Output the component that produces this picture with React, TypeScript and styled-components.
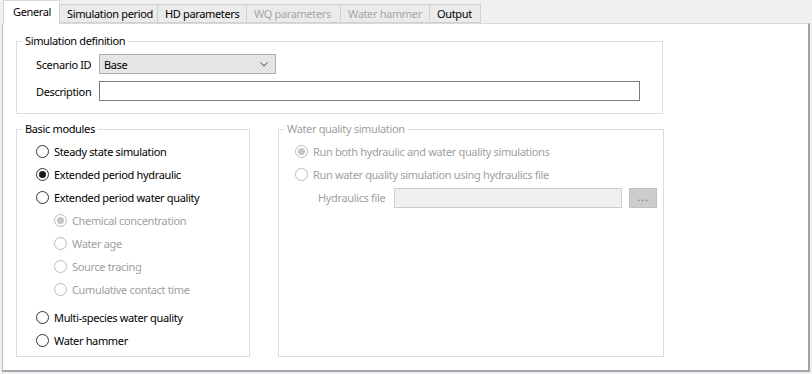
import { type FC } from "react";
import styled, { createGlobalStyle } from "styled-components";

const GlobalStyle = createGlobalStyle`
  html, body {
    margin: 0;
    padding: 0;
    background: #f0f0f0;
  }
  body {
    font-family: "Noto Sans", "DejaVu Sans", sans-serif;
    font-size: 11px;
    letter-spacing: -0.35px;
    color: #000;
  }
`;

const Window = styled.div`
  width: 812px;
  height: 374px;
  display: flex;
  flex-direction: column;
  box-sizing: border-box;
`;

const TabStrip = styled.div`
  display: flex;
  align-items: flex-end;
  height: 23px;
  padding-left: 3px;
  position: relative;
  z-index: 1;
`;

const Tab = styled.div<{ $active?: boolean; $disabled?: boolean; $width: number }>`
  box-sizing: border-box;
  width: ${(p) => p.$width}px;
  height: ${(p) => (p.$active ? 24 : 19)}px;
  margin-bottom: ${(p) => (p.$active ? -1 : 0)}px;
  padding-left: ${(p) => (p.$active ? 9 : 7)}px;
  padding-bottom: ${(p) => (p.$active ? 2 : 0)}px;
  display: flex;
  align-items: center;
  background: ${(p) => (p.$active ? "#ffffff" : "#ebebeb")};
  border: 1px solid ${(p) => (p.$active ? "#d9d9d9" : "#d0d0d0")};
  border-bottom: ${(p) => (p.$active ? "none" : "1px solid #d0d0d0")};
  color: ${(p) => (p.$disabled ? "#a6a6a6" : "#000")};
  white-space: nowrap;
  overflow: hidden;
  & + & {
    margin-left: -1px;
  }
`;

const Panel = styled.div`
  flex: 1;
  margin: 0 0 2px 2px;
  width: 808px;
  box-sizing: border-box;
  background: #fff;
  border-top: 1px solid #d9d9d9;
  border-left: 1px solid #b9b9c1;
  border-right: 2px solid #a4a4ae;
  border-bottom: 2px solid #a4a4ae;
  padding: 9px 0 0 13px;
`;

const Group = styled.fieldset<{ $width: number }>`
  box-sizing: border-box;
  width: ${(p) => p.$width}px;
  margin: 0;
  min-width: 0;
  border: 1px solid #dcdcdc;
  padding: 0 0 0 5px;
`;

const Legend = styled.legend<{ $disabled?: boolean }>`
  padding: 0 3px;
  line-height: 16px;
  color: ${(p) => (p.$disabled ? "#a0a0a0" : "#000")};
`;

const GroupBody = styled.div<{ $pad: string }>`
  padding: ${(p) => p.$pad};
`;

const FormGrid = styled.div`
  display: grid;
  grid-template-columns: 63px 1fr;
  row-gap: 7px;
  align-items: center;
`;

const FieldLabel = styled.span<{ $disabled?: boolean }>`
  color: ${(p) => (p.$disabled ? "#a0a0a0" : "#000")};
  white-space: nowrap;
`;

const Combo = styled.div`
  box-sizing: border-box;
  width: 177px;
  height: 20px;
  background: #e5e5e5;
  border: 1px solid #adadad;
  display: flex;
  align-items: center;
  justify-content: space-between;
  padding: 0 7px 0 4px;
`;

const TextInput = styled.div<{ $disabled?: boolean; $width?: number }>`
  box-sizing: border-box;
  width: ${(p) => (p.$width ? `${p.$width}px` : "100%")};
  height: 20px;
  background: ${(p) => (p.$disabled ? "#f0f0f0" : "#fff")};
  border: 1px solid ${(p) => (p.$disabled ? "#cccccc" : "#7a7a7a")};
`;

const BrowseButton = styled.div`
  box-sizing: border-box;
  width: 28px;
  height: 20px;
  margin-left: 7px;
  background: #cccccc;
  border: 1px solid #bfbfbf;
  color: #6f6f6f;
  display: flex;
  align-items: center;
  justify-content: center;
  padding-bottom: 3px;
  letter-spacing: 1px;
`;

const Columns = styled.div`
  display: flex;
  gap: 28px;
  margin-top: 7px;
`;

const RadioList = styled.div`
  display: flex;
  flex-direction: column;
`;

const RadioRow = styled.label<{ $indent?: number; $gap?: number }>`
  display: flex;
  align-items: center;
  height: 23px;
  gap: 5px;
  padding-left: ${(p) => p.$indent ?? 0}px;
  margin-top: ${(p) => p.$gap ?? 0}px;
  white-space: nowrap;
`;

const RadioCircle = styled.span<{ $checked?: boolean; $disabled?: boolean }>`
  box-sizing: border-box;
  width: 13px;
  height: 13px;
  border-radius: 50%;
  border: 1px solid ${(p) => (p.$disabled ? "#bcbcbc" : "#333")};
  background: #fff;
  display: flex;
  align-items: center;
  justify-content: center;
  flex: none;
  &::after {
    content: "";
    display: ${(p) => (p.$checked ? "block" : "none")};
    width: 7px;
    height: 7px;
    border-radius: 50%;
    background: ${(p) => (p.$disabled ? "#c4c4c4" : "#1a1a1a")};
  }
`;

const RadioText = styled.span<{ $disabled?: boolean }>`
  color: ${(p) => (p.$disabled ? "#a0a0a0" : "#000")};
`;

const FileRow = styled.div`
  display: flex;
  align-items: center;
  height: 23px;
  padding-left: 23px;
`;

const FileLabel = styled(FieldLabel)`
  width: 76px;
`;

const Chevron: FC = () => (
  <svg width="8" height="5" viewBox="0 0 8 5">
    <path d="M0.5 0.5 L4 4 L7.5 0.5" fill="none" stroke="#444" strokeWidth="1" />
  </svg>
);

interface RadioProps {
  label: string;
  checked?: boolean;
  disabled?: boolean;
  indent?: number;
  gap?: number;
}

const Radio: FC<RadioProps> = ({ label, checked, disabled, indent, gap }) => (
  <RadioRow $indent={indent} $gap={gap}>
    <RadioCircle $checked={checked} $disabled={disabled} />
    <RadioText $disabled={disabled}>{label}</RadioText>
  </RadioRow>
);

const tabs = [
  { label: "General", width: 57, active: true },
  { label: "Simulation period", width: 99 },
  { label: "HD parameters", width: 90 },
  { label: "WQ parameters", width: 95, disabled: true },
  { label: "Water hammer", width: 90, disabled: true },
  { label: "Output", width: 52 },
];

const App: FC = () => {
  return (
    <Window>
      <GlobalStyle />
      <TabStrip>
        {tabs.map((t) => (
          <Tab key={t.label} $active={t.active} $disabled={t.disabled} $width={t.width}>
            {t.label}
          </Tab>
        ))}
      </TabStrip>
      <Panel>
        <Group $width={647}>
          <Legend>Simulation definition</Legend>
          <GroupBody $pad="5px 22px 12px 14px">
            <FormGrid>
              <FieldLabel>Scenario ID</FieldLabel>
              <Combo>
                <span>Base</span>
                <Chevron />
              </Combo>
              <FieldLabel>Description</FieldLabel>
              <TextInput />
            </FormGrid>
          </GroupBody>
        </Group>
        <Columns>
          <Group $width={234}>
            <Legend>Basic modules</Legend>
            <GroupBody $pad="3px 8px 4px 14px">
              <RadioList>
                <Radio label="Steady state simulation" />
                <Radio label="Extended period hydraulic" checked />
                <Radio label="Extended period water quality" />
                <Radio label="Chemical concentration" checked disabled indent={18} />
                <Radio label="Water age" disabled indent={18} />
                <Radio label="Source tracing" disabled indent={18} />
                <Radio label="Cumulative contact time" disabled indent={18} />
                <Radio label="Multi-species water quality" gap={5} />
                <Radio label="Water hammer" />
              </RadioList>
            </GroupBody>
          </Group>
          <Group $width={386}>
            <Legend $disabled>Water quality simulation</Legend>
            <GroupBody $pad="3px 6px 4px 11px">
              <RadioList>
                <Radio label="Run both hydraulic and water quality simulations" checked disabled />
                <Radio label="Run water quality simulation using hydraulics file" disabled />
                <FileRow>
                  <FileLabel $disabled>Hydraulics file</FileLabel>
                  <TextInput $disabled $width={228} />
                  <BrowseButton>...</BrowseButton>
                </FileRow>
              </RadioList>
            </GroupBody>
          </Group>
        </Columns>
      </Panel>
    </Window>
  );
};

export default App;
